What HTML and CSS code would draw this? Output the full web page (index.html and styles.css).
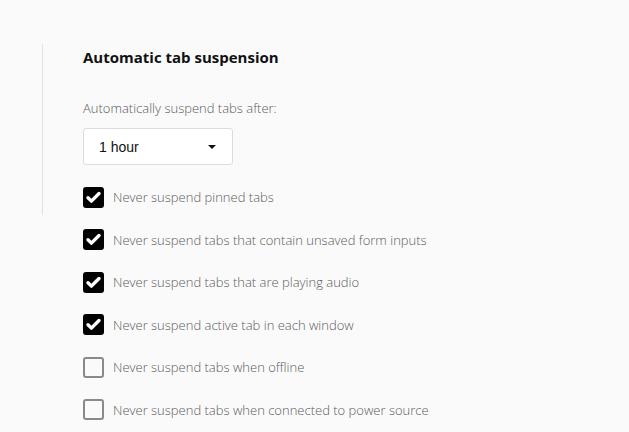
FILE: index.html
```html
<!DOCTYPE html>
<html lang="en">
<head>
    <meta charset="UTF-8">
    <title>Settings</title>
    <link rel="stylesheet" href="styles.css">
</head>
<body>
    <main class="settings">
        <section class="panel">
            <h2>Automatic tab suspension</h2>
            <label class="field-label" for="suspend-time">Automatically suspend tabs after:</label>
            <div class="select-box">
                <span id="suspend-time">1 hour</span>
                <span class="caret"></span>
            </div>
        </section>
        <ul class="options">
            <li><span class="box checked"><svg viewBox="0 0 21 21"><path d="M5 10.8l3.4 3.3 7.6-7.6" /></svg></span>Never suspend pinned tabs</li>
            <li><span class="box checked"><svg viewBox="0 0 21 21"><path d="M5 10.8l3.4 3.3 7.6-7.6" /></svg></span>Never suspend tabs that contain unsaved form inputs</li>
            <li><span class="box checked"><svg viewBox="0 0 21 21"><path d="M5 10.8l3.4 3.3 7.6-7.6" /></svg></span>Never suspend tabs that are playing audio</li>
            <li><span class="box checked"><svg viewBox="0 0 21 21"><path d="M5 10.8l3.4 3.3 7.6-7.6" /></svg></span>Never suspend active tab in each window</li>
            <li><span class="box"></span>Never suspend tabs when offline</li>
            <li><span class="box"></span>Never suspend tabs when connected to power source</li>
        </ul>
    </main>
</body>
</html>
```

FILE: styles.css
```css
* {
    margin: 0;
    padding: 0;
    box-sizing: border-box;
}

body {
    font-family: 'Open Sans', 'Noto Sans', sans-serif;
    background-color: #fafafa;
    color: #5a5a5a;
    height: 432px;
    overflow: hidden;
}

.settings {
    padding: 44px 0 0 42px;
}

.panel {
    border-left: 1px solid #e3e3e3;
    padding: 3px 0 0 40px;
    height: 171px;
}

.panel h2 {
    font-size: 15px;
    font-weight: 700;
    color: #111;
    line-height: 20px;
}

.field-label {
    display: block;
    margin-top: 32px;
    font-size: 13px;
    font-weight: 300;
    line-height: 18px;
}

.select-box {
    margin-top: 11px;
    width: 150px;
    height: 37px;
    background: #fff;
    border: 1px solid #dcdcdc;
    border-radius: 3px;
    display: flex;
    align-items: center;
    justify-content: space-between;
    padding: 0 15px 0 15px;
    font-family: 'Liberation Sans', Arial, sans-serif;
    font-size: 14px;
    color: #111;
}

.caret {
    width: 0;
    height: 0;
    border-left: 4px solid transparent;
    border-right: 4px solid transparent;
    border-top: 4px solid #111;
    margin-right: 1px;
}

.options {
    list-style: none;
    margin-top: -39px;
    padding-left: 41px;
}

.options li {
    display: flex;
    align-items: center;
    gap: 9px;
    height: 42.5px;
    font-size: 13px;
    font-weight: 300;
}

.box {
    width: 21px;
    height: 21px;
    border-radius: 3px;
    border: 2px solid #8a8a8a;
    flex: none;
    display: flex;
}

.box.checked {
    background: #000;
    border: none;
}

.box svg {
    width: 100%;
    height: 100%;
    fill: none;
    stroke: #fff;
    stroke-width: 3.4;
    stroke-linecap: round;
    stroke-linejoin: round;
}
```
